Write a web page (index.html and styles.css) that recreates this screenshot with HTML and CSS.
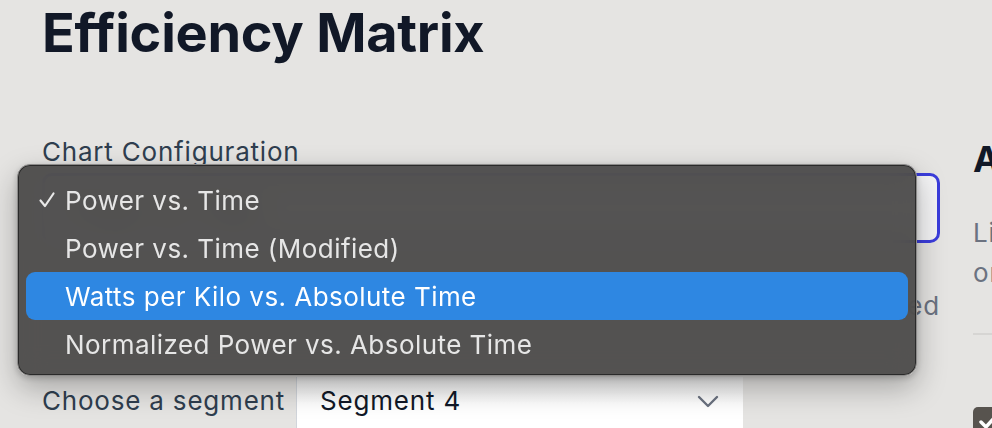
FILE: index.html
```html
<!DOCTYPE html>
<html lang="en">
<head>
<meta charset="utf-8">
<title>Efficiency Matrix</title>
<link rel="stylesheet" href="styles.css">
</head>
<body>
<div class="page">
  <h1 class="title">Efficiency Matrix</h1>
  <div class="layout">
    <section class="config">
      <label class="field-label" for="chart">Chart Configuration</label>
      <div class="select-focus" id="chart">
        <span class="select-value">Power vs. Time</span>
      </div>
      <p class="helper">3 series selected</p>
      <div class="segment-row">
        <span class="field-label inline">Choose a segment</span>
        <div class="segment-select">
          <span>Segment 4</span>
          <svg class="chevron" width="22" height="13" viewBox="0 0 22 13" aria-hidden="true"><path d="M2 2l9 9 9-9" fill="none" stroke="#6b7280" stroke-width="2.4" stroke-linecap="round" stroke-linejoin="round"/></svg>
        </div>
      </div>

      <ul class="popup" role="listbox">
        <li class="opt checked"><svg class="check" width="18" height="18" viewBox="0 0 18 18" aria-hidden="true"><path d="M2.5 9.5l4.5 5.5 8.5-12.5" fill="none" stroke="#e8e8e8" stroke-width="2.2" stroke-linecap="round" stroke-linejoin="round"/></svg>Power vs. Time</li>
        <li class="opt">Power vs. Time (Modified)</li>
        <li class="opt active">Watts per Kilo vs. Absolute Time</li>
        <li class="opt">Normalized Power vs. Absolute Time</li>
      </ul>
    </section>

    <aside class="side">
      <h2 class="side-title">Analysis</h2>
      <p class="side-text">Lines show efficiency over the selected range<br>or segment.</p>
      <hr class="rule">
      <div class="checkbox"><svg width="30" height="30" viewBox="0 0 30 30"><path d="M8 15l5 5 9-10" fill="none" stroke="#fff" stroke-width="3.5" stroke-linecap="round" stroke-linejoin="round"/></svg></div>
    </aside>
  </div>
</div>
</body>
</html>
```
FILE: styles.css
```css
* { box-sizing: border-box; }
html, body { margin: 0; padding: 0; }
body {
  background: #e5e4e2;
  font-family: Inter, "Noto Sans", sans-serif;
  color: #111827;
  overflow: hidden;
  width: 992px;
  height: 428px;
}
.page {
  padding: 1px 0 0 42px;
}
.title {
  margin: 0;
  font-size: 54px;
  line-height: 64px;
  font-weight: 700;
  letter-spacing: -0.25px;
  color: #111827;
}
.layout {
  margin-top: 71px;
  display: grid;
  grid-template-columns: 898px 320px;
  column-gap: 33px;
}
.config { position: relative; }
.field-label {
  display: block;
  font-size: 26px;
  line-height: 32px;
  letter-spacing: 0.8px;
  color: #2f3e4f;
}
.field-label.inline { display: inline-block; }
.select-focus {
  margin-top: 5px;
  height: 70px;
  border: 3px solid #3b3ddc;
  border-radius: 10px;
  background: #f4f4f5;
  display: flex;
  align-items: center;
  padding-left: 24px;
  font-size: 26px;
}
.helper {
  margin: 47px 0 0;
  font-size: 26px;
  line-height: 32px;
  letter-spacing: 0.8px;
  color: #6b7280;
  text-align: right;
}
.segment-row {
  margin-top: 55px;
  display: flex;
  align-items: flex-start;
  gap: 11px;
}
.segment-row .field-label { margin-top: 8px; }
.segment-select {
  width: 447px;
  height: 60px;
  background: linear-gradient(#eeeeee, #ffffff 45%);
  border-left: 1px solid #d1d5db;
  display: flex;
  align-items: flex-start;
  justify-content: space-between;
  padding: 8px 24px 0 23px;
  font-size: 26px;
  line-height: 32px;
  letter-spacing: 0.8px;
  color: #111827;
}
.chevron { margin-top: 10px; }

.popup {
  position: absolute;
  left: -25px;
  top: 28px;
  width: 900px;
  height: 212px;
  margin: 0;
  padding: 11px 8px 0;
  list-style: none;
  border-radius: 13px;
  background: rgba(72, 71, 70, 0.93);
  backdrop-filter: blur(14px);
  border: 1px solid #8c8b8a;
  box-shadow: inset 0 0 0 1px #2a2a2a, 0 12px 30px rgba(0,0,0,0.28), 0 2px 6px rgba(0,0,0,0.2);
}
.opt {
  height: 48px;
  display: flex;
  align-items: center;
  padding-left: 39px;
  font-size: 26px;
  letter-spacing: 0.45px;
  color: #e6e6e6;
  border-radius: 9px;
  position: relative;
}
.opt.active {
  background: #2e87e2;
  color: #ffffff;
}
.check {
  position: absolute;
  left: 12px;
  top: 15px;
}

.side-title {
  margin: 3px 0 0;
  font-size: 36px;
  line-height: 40px;
  font-weight: 700;
  color: #111827;
}
.side-text {
  margin: 34px 0 0;
  font-size: 26px;
  line-height: 40px;
  letter-spacing: 0.8px;
  color: #6b7280;
  white-space: nowrap;
}
.rule {
  margin: 40px 0 0;
  border: 0;
  border-top: 2px solid #d6d5d3;
}
.checkbox {
  margin-top: 72px;
  width: 30px;
  height: 30px;
  border-radius: 5px;
  background: #57534e;
}
```
